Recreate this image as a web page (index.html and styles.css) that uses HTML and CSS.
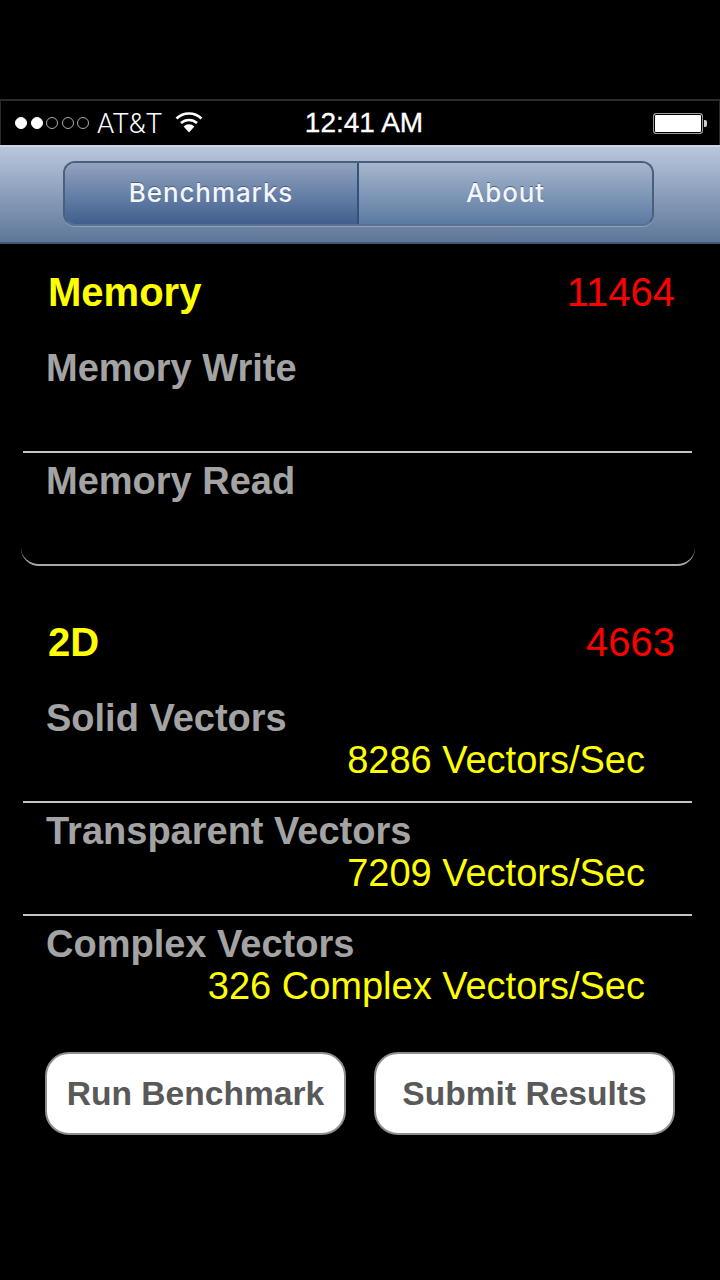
FILE: index.html
```html
<html>
<head>
<title>Benchmarks</title>
<link rel="stylesheet" href="styles.css">
</head>
<body>
<div class="statusbar">
<div class="status-left">
<span class="dot on"></span><span class="dot on"></span><span class="dot"></span><span class="dot"></span><span class="dot"></span>
<span class="carrier">AT&amp;T</span>
<svg class="wifi" width="28" height="22" viewBox="0 0 28 22">
<path d="M1.5 7.5 A18 18 0 0 1 26.5 7.5" fill="none" stroke="#fff" stroke-width="2.6"/>
<path d="M6 12 A12 12 0 0 1 22 12" fill="none" stroke="#fff" stroke-width="2.6"/>
<path d="M14 21.5 L8.6 15.6 A7.6 7.6 0 0 1 19.4 15.6 Z" fill="#fff"/>
</svg>
</div>
<div class="clock">12:41 AM</div>
<div class="status-right">
<div class="battery"></div><div class="battery-tip"></div>
</div>
</div>

<div class="navbar">
<div class="segments">
<div class="segment selected">Benchmarks</div>
<div class="segment">About</div>
</div>
</div>

<div class="content">
<div class="group-head first">
<span class="group-title">Memory</span>
<span class="group-score">11464</span>
</div>
<div class="group">
<div class="row">
<div class="row-title">Memory Write</div>
</div>
<div class="row">
<div class="row-title">Memory Read</div>
</div>
</div>

<div class="group-head second">
<span class="group-title">2D</span>
<span class="group-score">4663</span>
</div>
<div class="group plain">
<div class="row">
<div class="row-title">Solid Vectors</div>
<div class="row-value">8286 Vectors/Sec</div>
</div>
<div class="row">
<div class="row-title">Transparent Vectors</div>
<div class="row-value">7209 Vectors/Sec</div>
</div>
<div class="row">
<div class="row-title">Complex Vectors</div>
<div class="row-value">326 Complex Vectors/Sec</div>
</div>
</div>

<div class="buttons">
<div class="button">Run Benchmark</div>
<div class="button">Submit Results</div>
</div>
</div>
</body>
</html>
```

FILE: styles.css
```css
html, body {
margin: 0;
background: #000;
}

body {
width: 720px;
height: 1280px;
padding-top: 99px;
box-sizing: border-box;
overflow: hidden;
font-family: "Liberation Sans", sans-serif;
}

.statusbar {
height: 46px;
box-sizing: border-box;
border-top: 2px solid #2c2c2c;
border-left: 1px solid #2c2c2c;
border-right: 1px solid #2c2c2c;
display: flex;
align-items: center;
padding: 0 12px 0 14px;
color: #fff;
position: relative;
}

.status-left {
flex: 1;
display: flex;
align-items: center;
}

.dot {
width: 10px;
height: 10px;
border: 1px solid #aaa;
border-radius: 50%;
margin-right: 3.6px;
}

.dot.on {
background: #fff;
border-color: #fff;
}

.carrier {
font-family: Roboto, sans-serif;
font-size: 27.5px;
font-weight: 300;
margin-left: 4px;
}

.wifi {
margin-left: 13px;
margin-bottom: 3px;
}

.clock {
font-size: 28px;
margin-left: 6px;
-webkit-text-stroke: 0.3px #fff;
}

.status-right {
flex: 1;
display: flex;
justify-content: flex-end;
align-items: center;
}

.battery {
width: 50px;
height: 21px;
box-sizing: border-box;
background: #fff;
border: 1px solid #999;
border-radius: 3px;
box-shadow: inset 0 0 0 1px #000;
}

.battery-tip {
width: 3px;
height: 7px;
background: #ccc;
margin-left: 1px;
border-radius: 0 2px 2px 0;
}

.navbar {
height: 99px;
box-sizing: border-box;
background: linear-gradient(#b9c7db, #5d7699);
border-top: 2px solid #cbd6e4;
border-bottom: 2px solid #3f5877;
padding-top: 14px;
padding-left: 63px;
}

.segments {
width: 591px;
height: 65px;
box-sizing: border-box;
display: flex;
border: 2px solid #4b5f7c;
border-bottom-color: #5b7190;
border-radius: 12px;
overflow: hidden;
box-shadow: 0 1px 0 #8fa3bd;
}

.segment {
flex: 1;
display: flex;
align-items: center;
justify-content: center;
padding-bottom: 3px;
box-sizing: border-box;
color: #f4f6f9;
font-family: Inter, sans-serif;
font-size: 26px;
font-weight: 500;
letter-spacing: 0.9px;
text-shadow: 0 -1px 0 #4a5f7f;
background: linear-gradient(#a6b6cd, #5b7aa2);
}

.segment.selected {
flex: none;
width: 294px;
border-right: 2px solid #35507a;
background: linear-gradient(#91a3bf, #3f5f8f);
}

.content {
padding: 0 25px 0 21px;
}

.group-head {
display: flex;
justify-content: space-between;
align-items: center;
padding: 0 20px 0 27px;
height: 46px;
}

.group-head.first {
margin-top: 25px;
}

.group-head.second {
margin-top: 53px;
}

.group-title {
color: #ffff00;
font-size: 40px;
font-weight: bold;
}

.group-score {
color: #ff0000;
font-size: 40px;
}

.group {
margin-top: 25px;
height: 226px;
box-sizing: border-box;
border-bottom: 2px solid #a8a8a8;
border-radius: 0 0 18px 18px;
}

.group.plain {
border-bottom: none;
height: auto;
}

.row {
height: 113px;
box-sizing: border-box;
margin: 0 3px 0 2px;
padding: 7px 0 0 23px;
border-bottom: 2px solid #c4c4c4;
}

.row:last-child {
border-bottom: none;
}

.row-title {
color: #a3a3a3;
font-size: 38px;
font-weight: bold;
line-height: 42px;
white-space: nowrap;
}

.row-value {
color: #ffff00;
font-size: 38px;
line-height: 42px;
text-align: right;
padding-right: 47px;
white-space: nowrap;
}

.buttons {
display: flex;
gap: 28px;
margin: 23px 0 0 24px;
}

.button {
width: 301px;
height: 83px;
box-sizing: border-box;
display: flex;
align-items: center;
justify-content: center;
background: #fff;
border: 2px solid #8e8e8e;
border-radius: 24px;
color: #595959;
font-size: 33.6px;
font-weight: bold;
}
```
